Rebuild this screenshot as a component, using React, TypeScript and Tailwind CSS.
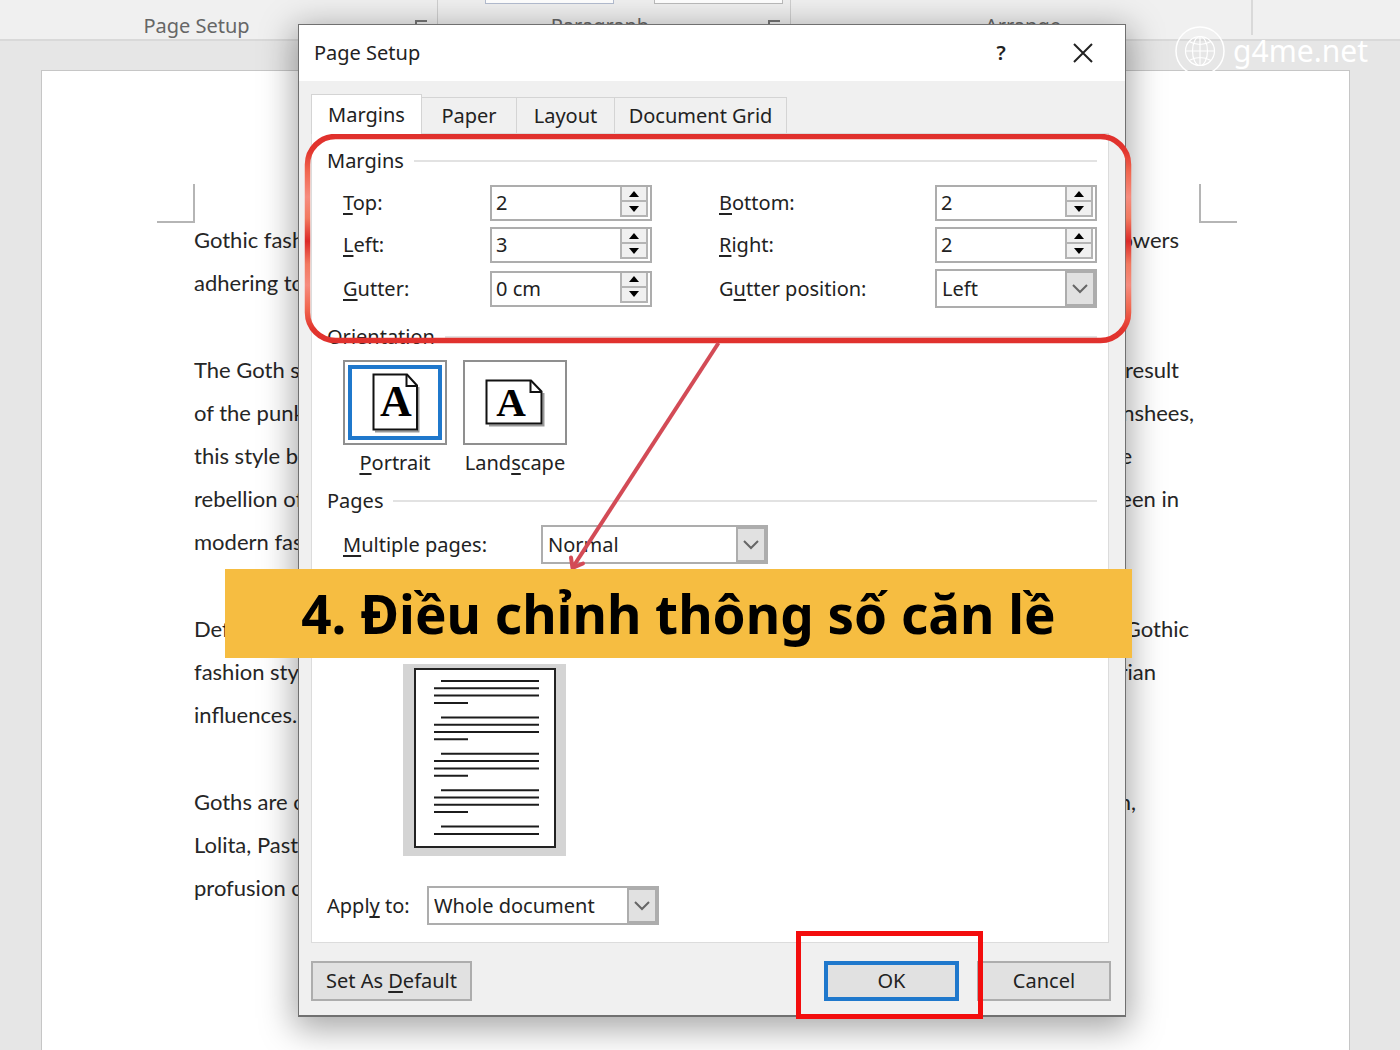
import { useState } from 'react';
import type { ReactNode } from 'react';
import clsx from 'clsx';

interface DocLine {
    start: string;
    end?: string;
    inset?: string;
}

const paragraphs: DocLine[][] = [
    [
        { start: 'Gothic fash', end: 'owers', inset: 'pr-[21px]' },
        { start: 'adhering to' },
    ],
    [
        { start: 'The Goth s', end: 'result', inset: 'pr-[21px]' },
        { start: 'of the punk', end: 'nshees,', inset: 'pr-[6px]' },
        { start: 'this style b', end: 'e', inset: 'pr-[68px]' },
        { start: 'rebellion of', end: 'een in', inset: 'pr-[21px]' },
        { start: 'modern fas' },
    ],
    [
        { start: 'Def', end: 'Gothic', inset: 'pr-[11px]' },
        { start: 'fashion sty', end: 'rian', inset: 'pr-[44px]' },
        { start: 'influences.' },
    ],
    [
        { start: 'Goths are o', end: 'n,', inset: 'pr-[64px]' },
        { start: 'Lolita, Past' },
        { start: 'profusion o' },
    ],
];

const tabs = [
    { name: 'Margins', width: 'w-[111px]' },
    { name: 'Paper', width: 'w-[95px]' },
    { name: 'Layout', width: 'w-[98px]' },
    { name: 'Document Grid', width: 'w-[172px]' },
];

const Key = ({ children }: { children: ReactNode }) => (
    <u className="decoration-2 underline-offset-[3px] [text-decoration-skip-ink:none]">{children}</u>
);

const Launcher = () => (
    <svg width="14" height="14" viewBox="0 0 14 14" fill="none" stroke="#777" strokeWidth="2">
        <path d="M1 12V1h11M6 6l6 6M12 7v5H7" />
    </svg>
);

const Ribbon = () => (
    <div className="flex h-[41px] shrink-0 border-b-2 border-[#d9d9d9] bg-[#f0f0f0] text-xl leading-7 text-[#666]">
        <div className="relative flex w-[438px] items-start justify-center border-r border-[#cfcfcf] pt-3 pr-11">
            Page Setup
            <span className="absolute top-5 right-2"><Launcher /></span>
        </div>
        <div className="relative flex w-[353px] items-start justify-center border-r border-[#cfcfcf] pt-3 pr-7">
            <span className="absolute top-0 left-[47px] h-1 w-[129px] border border-t-0 border-[#b4bdd0] bg-white" />
            <span className="absolute top-0 left-[216px] h-1 w-[129px] border border-t-0 border-[#bbb] bg-white" />
            Paragraph
            <span className="absolute top-5 right-2"><Launcher /></span>
        </div>
        <div className="flex h-[35px] w-[462px] items-start justify-center border-r-2 border-[#d9d9d9] pt-3 pl-1">
            Arrange
        </div>
    </div>
);

const DocumentPage = () => (
    <article className="mt-[29px] mr-[50px] ml-[41px] grow border border-b-0 border-[#c6c6c6] bg-white font-['Lato','Liberation_Sans',sans-serif] text-[22px] leading-[43px] text-[#262626]">
        <div className="flex justify-between pt-[113px] pr-[112px] pl-[115px]">
            <span className="h-[39px] w-[38px] border-r-2 border-b-2 border-[#b5b5b5]" />
            <span className="h-[39px] w-[38px] border-b-2 border-l-2 border-[#b5b5b5]" />
        </div>
        <div className="-mt-[5px] flex flex-col gap-11 pr-[149px] pl-[152px]">
            {paragraphs.map((lines, i) => (
                <div key={i}>
                    {lines.map((line) => (
                        <div key={line.start} className="flex justify-between whitespace-nowrap">
                            <span>{line.start}</span>
                            {line.end && <span className={line.inset}>{line.end}</span>}
                        </div>
                    ))}
                </div>
            ))}
        </div>
    </article>
);

const Spinner = ({ id, initial }: { id: string; initial: string }) => {
    const [value, setValue] = useState(initial);

    const step = (delta: number) => {
        const unit = value.replace(/^[\d.]+/, '');
        setValue(Math.max(0, (parseFloat(value) || 0) + delta) + unit);
    };

    return (
        <div className="flex h-9 w-[162px] border-2 border-[#adadad] bg-white">
            <input
                id={id}
                value={value}
                onChange={(e) => setValue(e.target.value)}
                className="w-0 min-w-0 grow pl-1 outline-none"
            />
            <div className="mr-0.5 mb-0.5 flex w-7 shrink-0 flex-col">
                <button
                    type="button"
                    aria-label="Increase"
                    onClick={() => step(1)}
                    className="flex flex-1 items-center justify-center border-x-2 border-b-2 border-[#b4b4b4] bg-[#f0f0f0]"
                >
                    <svg width="10" height="6" viewBox="0 0 10 6"><path d="M0 6 5 0l5 6z" /></svg>
                </button>
                <button
                    type="button"
                    aria-label="Decrease"
                    onClick={() => step(-1)}
                    className="flex flex-1 items-center justify-center border-2 border-t-0 border-[#b4b4b4] bg-[#f0f0f0]"
                >
                    <svg width="10" height="6" viewBox="0 0 10 6"><path d="M0 0h10L5 6z" /></svg>
                </button>
            </div>
        </div>
    );
};

const Dropdown = ({ id, options, width }: { id: string; options: string[]; width: string }) => (
    <div className={clsx('relative h-[39px] border-2 border-[#adadad] bg-white', width)}>
        <select id={id} className="h-full w-full appearance-none pr-8 pl-[5px] outline-none">
            {options.map((o) => (
                <option key={o}>{o}</option>
            ))}
        </select>
        <span className="pointer-events-none absolute inset-y-0 right-0 flex w-[30px] items-center justify-center border-2 border-[#adadad] bg-[#e1e1e1]">
            <svg width="16" height="10" viewBox="0 0 16 10" fill="none" stroke="#666" strokeWidth="2">
                <path d="M1 1l7 7 7-7" />
            </svg>
        </span>
    </div>
);

const Heading = ({ children }: { children: ReactNode }) => (
    <h3 className="flex h-7 items-center gap-2.5 after:h-0.5 after:grow after:bg-[#e2e2e2]">{children}</h3>
);

const PortraitIcon = () => (
    <svg width="48" height="60" viewBox="0 0 48 60" fill="none" className="overflow-visible">
        <path d="M4 58.500H47.500V14" stroke="#999" strokeWidth="2" />
        <path d="M2.500 1.500H36L46 12.500V56.500H2.500Z" fill="#fff" stroke="#111" strokeWidth="2" />
        <path d="M35.500 2v11H46" stroke="#111" strokeWidth="2" />
        <text x="25" y="43" textAnchor="middle" fontSize="44" fontWeight="bold" fontFamily="Liberation Serif, serif" fill="#000">A</text>
    </svg>
);

const LandscapeIcon = () => (
    <svg width="60" height="48" viewBox="0 0 60 48" fill="none" className="overflow-visible">
        <path d="M4 46.500H58.500V14" stroke="#999" strokeWidth="2" />
        <path d="M1.500 1.500H46L56.500 12.500V44.500H1.500Z" fill="#fff" stroke="#111" strokeWidth="2" />
        <path d="M45.500 2v11H56" stroke="#111" strokeWidth="2" />
        <text x="26" y="37" textAnchor="middle" fontSize="41" fontWeight="bold" fontFamily="Liberation Serif, serif" fill="#000">A</text>
    </svg>
);

const Preview = () => {
    const rows = Array.from({ length: 18 }, (_, i) => ({
        y: 17 + Math.floor(i / 4) * 36.400 + (i % 4) * 7.300,
        x1: i % 4 === 0 ? 38 : 31,
        x2: i % 4 === 3 ? 65 : 136,
    }));

    return (
        <svg width="163" height="192" viewBox="0 0 163 192" className="block">
            <rect width="163" height="192" fill="#d4d4d4" />
            <rect x="12" y="5" width="140" height="178" fill="#fff" stroke="#222" strokeWidth="2" />
            {rows.map((r) => (
                <path key={r.y} d={`M${r.x1} ${r.y}H${r.x2}`} stroke="#1c1c1c" strokeWidth="2" />
            ))}
        </svg>
    );
};

const Orientation = () => {
    const [value, setValue] = useState('portrait');

    const option = (id: string, icon: ReactNode, label: ReactNode) => (
        <label className="flex w-[104px] flex-col items-center gap-1 whitespace-nowrap">
            <input
                type="radio"
                name="orientation"
                checked={value === id}
                onChange={() => setValue(id)}
                className="sr-only"
            />
            <span className="flex h-[85px] w-full border-2 border-[#8f8f8f] bg-white p-[3px]">
                <span
                    className={clsx(
                        'flex grow items-center justify-center border-4',
                        value === id ? 'border-[#1f78cc]' : 'border-transparent',
                    )}
                >
                    {icon}
                </span>
            </span>
            <span>{label}</span>
        </label>
    );

    return (
        <div className="mt-[9px] flex gap-4 pl-4">
            {option('portrait', <PortraitIcon />, <><Key>P</Key>ortrait</>)}
            {option('landscape', <LandscapeIcon />, <>Land<Key>s</Key>cape</>)}
        </div>
    );
};

const Annotations = () => (
    <>
        {/* rounded highlight around the margin fields */}
        <svg width="828" height="210" viewBox="0 0 828 210" fill="none" className="pointer-events-none absolute top-[109px] left-[5px]">
            <defs>
                <linearGradient id="ring" x1="0" y1="0" x2="0" y2="210" gradientUnits="userSpaceOnUse">
                    <stop offset="0" stopColor="#e0302d" />
                    <stop offset="0.08" stopColor="#e2352e" />
                    <stop offset="0.18" stopColor="#f1674f" />
                    <stop offset="0.3" stopColor="#f68c7e" />
                    <stop offset="0.4" stopColor="#f27a60" />
                    <stop offset="0.51" stopColor="#dc2a28" />
                    <stop offset="0.62" stopColor="#f27a60" />
                    <stop offset="0.72" stopColor="#f68c7e" />
                    <stop offset="0.83" stopColor="#f1674f" />
                    <stop offset="0.93" stopColor="#e2352e" />
                    <stop offset="1" stopColor="#e0302d" />
                </linearGradient>
            </defs>
            <rect x="3.500" y="2.500" width="821" height="204" rx="28" stroke="url(#ring)" strokeWidth="5.500" />
        </svg>
        <svg width="160" height="232" viewBox="0 0 160 232" fill="none" stroke="#d34b56" strokeWidth="4" className="pointer-events-none absolute top-[316px] left-[267px]">
            <path d="M152.500 2 7 226" />
            <path d="M5 216.500 6.500 227 17 222.500" strokeLinecap="round" strokeLinejoin="round" />
        </svg>
        <div className="absolute top-[544px] left-[-74px] flex h-[89px] w-[907px] items-center justify-center bg-[#f6bd41] text-[53px] leading-none font-bold whitespace-nowrap text-black">
            4. Điều chỉnh thông số căn lề
        </div>
    </>
);

const PageSetupDialog = () => {
    const [tab, setTab] = useState('Margins');

    return (
        <section
            role="dialog"
            aria-label="Page Setup"
            className="relative w-[828px] shrink-0 border border-b-2 border-[#707070] bg-[#f0f0f0] text-xl leading-7 text-[#222] shadow-[0_8px_32px_4px_rgba(0,0,0,0.35)]"
        >
            <header className="flex h-14 items-center bg-white pr-8 pl-[15px]">
                <h2 className="grow">Page Setup</h2>
                <button type="button" aria-label="Help" className="w-10 font-semibold">?</button>
                <button type="button" aria-label="Close" className="ml-[52px]">
                    <svg width="20" height="20" viewBox="0 0 20 20" stroke="#222" strokeWidth="2">
                        <path d="M1 1l18 18M19 1 1 19" />
                    </svg>
                </button>
            </header>

            <div className="pt-[13px] pr-4 pl-3">
                <div role="tablist" className="flex h-[39px] items-end">
                    {tabs.map((t) => (
                        <button
                            key={t.name}
                            type="button"
                            role="tab"
                            aria-selected={tab === t.name}
                            onClick={() => setTab(t.name)}
                            className={clsx(
                                'border-t border-r border-[#d4d4d4]',
                                t.width,
                                tab === t.name ? 'z-10 -mb-px h-10 border-l bg-white' : 'h-9',
                            )}
                        >
                            {t.name}
                        </button>
                    ))}
                </div>

                <div className="border border-[#dcdcdc] bg-white pt-[13px] pr-[11px] pb-[17px] pl-[15px]">
                    <Heading>Margins</Heading>
                    <div className="mt-2.5 grid grid-cols-[147px_1fr_216px_162px] items-center gap-y-1.5 pl-4">
                        <label htmlFor="top"><Key>T</Key>op:</label>
                        <Spinner id="top" initial="2" />
                        <label htmlFor="bottom"><Key>B</Key>ottom:</label>
                        <Spinner id="bottom" initial="2" />
                        <label htmlFor="left"><Key>L</Key>eft:</label>
                        <Spinner id="left" initial="3" />
                        <label htmlFor="right"><Key>R</Key>ight:</label>
                        <Spinner id="right" initial="2" />
                        <label htmlFor="gutter"><Key>G</Key>utter:</label>
                        <Spinner id="gutter" initial="0 cm" />
                        <label htmlFor="gutter-position">G<Key>u</Key>tter position:</label>
                        <Dropdown id="gutter-position" options={['Left', 'Top']} width="w-[162px]" />
                    </div>

                    <div className="mt-[15px]">
                        <Heading>Orientation</Heading>
                    </div>
                    <Orientation />

                    <div className="mt-2.5">
                        <Heading>Pages</Heading>
                    </div>
                    <div className="mt-2.5 flex items-center pl-4">
                        <label htmlFor="multiple" className="w-[198px]"><Key>M</Key>ultiple pages:</label>
                        <Dropdown id="multiple" options={['Normal', 'Mirror margins', '2 pages per sheet']} width="w-[227px]" />
                    </div>

                    <div className="mt-[100px] pl-[76px]">
                        <Preview />
                    </div>

                    <div className="mt-[30px] flex items-center">
                        <label htmlFor="apply" className="w-[100px]">Appl<Key>y</Key> to:</label>
                        <Dropdown id="apply" options={['Whole document', 'This point forward']} width="w-[232px]" />
                    </div>
                </div>
            </div>

            <footer className="flex pt-[18px] pr-3.5 pb-3.5 pl-3">
                <button type="button" className="h-10 w-[161px] border-2 border-[#adadad] bg-[#e1e1e1]">
                    Set As <Key>D</Key>efault
                </button>
                <span className="relative mr-[18px] ml-auto">
                    <button type="button" className="h-10 w-[135px] border-4 border-[#1f78cc] bg-[#e1e1e1]">
                        OK
                    </button>
                    <span className="pointer-events-none absolute -top-[30px] -right-6 -bottom-[18px] -left-7 z-10 border-[5px] border-[#f30d0d]" />
                </span>
                <button type="button" className="h-10 w-[134px] border-2 border-[#adadad] bg-[#e1e1e1]">
                    Cancel
                </button>
            </footer>

            <Annotations />
        </section>
    );
};

const Watermark = () => (
    <div className="absolute top-[26px] right-8 flex items-center gap-2 text-[30px] leading-none text-white">
        <svg width="50" height="50" viewBox="0 0 50 50" fill="none" stroke="#fff">
            <circle cx="25" cy="25" r="24" strokeWidth="1.500" />
            <g strokeWidth="1.200">
                <circle cx="25" cy="25" r="14.500" />
                <ellipse cx="25" cy="25" rx="7.500" ry="14.500" />
                <path d="M25 10.500v29M10.500 25h29M14 15.500q11 6 22 0M14 34.500q11-6 22 0" />
            </g>
        </svg>
        g4me.net
    </div>
);

const App = () => (
    <main className="relative flex min-h-screen flex-col overflow-hidden bg-[#e6e6e6] font-['Noto_Sans','Open_Sans',sans-serif]">
        <Ribbon />
        <DocumentPage />
        <div className="absolute inset-x-0 top-6 flex justify-center pl-6">
            <PageSetupDialog />
        </div>
        <Watermark />
    </main>
);

export default App;
